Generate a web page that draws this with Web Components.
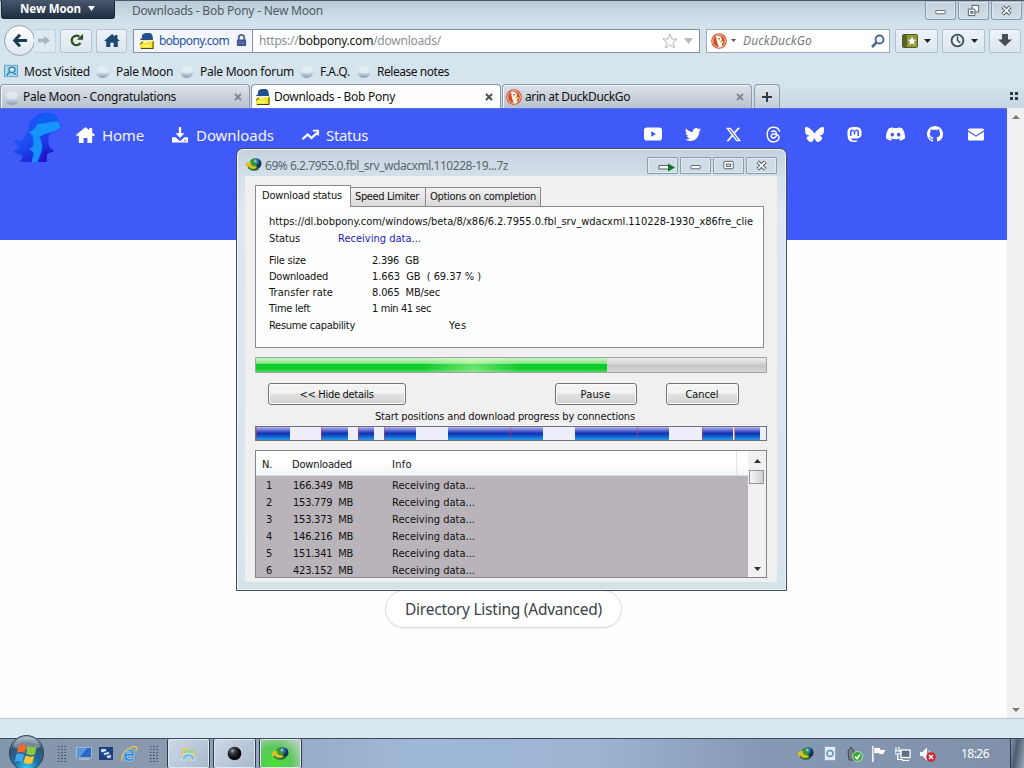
<!DOCTYPE html>
<html lang="en">
<head>
<meta charset="utf-8">
<title>Downloads - Bob Pony - New Moon</title>
<style>
  html, body { margin: 0; width: 1024px; height: 768px; overflow: hidden; background: #fefefe; }
  body { font: 12px/16px "Noto Sans", "Open Sans", sans-serif; color: #111; }
</style>
</head>
<body>
<nm-desktop></nm-desktop>

<script>
// Every drawing used by the page, keyed by name: [viewBox, markup]
const ICONS = {
  back: ['0 0 18 18', '<path d="M9 2 3 9l6 7M4 9h13" fill="none" stroke="#1d3c52" stroke-width="3.4"/>'],
  forward: ['0 0 12 12', '<path d="M0 4h6V1l6 5-6 5V8H0z" fill="#a9b6c2"/>'],
  reload: ['0 0 16 16', '<path d="M12.2 10.5A5 5 0 1 1 11 4" fill="none" stroke="#2f4f20" stroke-width="2.4"/><path d="M8.5 7.2H15V.8z" fill="#2f4f20"/>'],
  home: ['0 0 16 16', '<path d="M0 8.5 8 1l3 2.8V2h2.4v4L16 8.500l-2.2.3V15H9.700v-4.500H6.300V15H2.200V8.800z" fill="#1e4870"/>'],
  pony: ['0 0 16 16', '<path d="M1 7Q1 6 3 5 2 0 8 0h3q3 1 3 7H1z" fill="#23518f"/><path d="M2 9l3-2 5 1 2 1 1-2 2 1v8H1v-5z" fill="#f3e52e"/><path d="M4 8.500l2-1 3 .5-1 2H5z" fill="#f7f3d8"/><path d="M1 11l3-2M14 8.500V15.500H2" stroke="#33301a" fill="none" stroke-width=".9"/><path d="M3 12h8v2H3z" fill="#fff27a"/>'],
  lock: ['0 0 12 14', '<path d="M3 7V4a3 3 0 0 1 6 0v3" fill="none" stroke="#53659c" stroke-width="2"/><rect x="1" y="6" width="10" height="7" rx="1" fill="#3c5195"/><path d="M2 8.500h8M2 10.500h8" stroke="#6e7fb6"/>'],
  star: ['0 0 16 16', '<path d="M8 1l2 5h5l-4 3.300L12.500 15 8 11.500 3.500 15 5 9.300 1 6h5z" fill="#fff" stroke="#b3b7bd"/>'],
  drop: ['0 0 8 5', '<path d="M0 0h8L4 5z" fill="currentColor"/>'],
  duck: ['0 0 16 16', '<circle cx="8" cy="8" r="7.800" fill="#cf4a27"/><circle cx="8" cy="8" r="6.300" fill="none" stroke="#fbe3d4" stroke-width=".9"/><path d="M5 3q5-1 6 3l-.5 2 2.500 1-2 1.500L11 14l-3 .5Q6 10 5.500 7z" fill="#fff4e6"/><path d="M9 8l4 .3-3 1.500z" fill="#f0b32c"/><circle cx="8" cy="5.800" r=".8" fill="#345"/>'],
  search: ['0 0 14 14', '<circle cx="8.500" cy="5.500" r="4" fill="#f4f8ff" stroke="#4b6396" stroke-width="1.800"/><path d="M5.500 8.500 1 13" stroke="#4b6396" stroke-width="2.500"/>'],
  bookmarks: ['0 0 16 14', '<rect x=".5" y=".5" width="15" height="13" rx="1" fill="#8e9834" stroke="#535b22"/><path d="M1 1h4v12H1z" fill="#59622b"/><path d="M10 2.500l1.300 3 3 .2-2.300 2 .8 3.300L10 9.300 7.200 11 8 7.700 5.700 5.700l3-.2z" fill="#fff"/>'],
  clock: ['0 0 16 16', '<circle cx="8" cy="8" r="6.300" fill="#eef3f6" stroke="#3d4f52" stroke-width="2"/><path d="M8 3.500V8l3 2.500" fill="none" stroke="#3d4f52" stroke-width="1.600"/>'],
  arrowdown: ['0 0 14 16', '<path d="M4 1h6v6h4l-7 7-7-7h4z" fill="#474d54"/>'],
  visited: ['0 0 14 16', '<rect x=".5" y="1.500" width="13" height="13" fill="#a8d8ec" stroke="#5ba0c2"/><circle cx="8" cy="6.500" r="3" fill="#d9f1fa" stroke="#2d7fae" stroke-width="1.300"/><path d="M6 9l-3.500 4M9 10l3 2" stroke="#2d7fae" stroke-width="1.600"/>'],
  moon: ['0 0 14 14', '<defs><linearGradient id="m" x1="0" y1="0" x2="0" y2="1"><stop offset=".3" stop-color="#d3dee8" stop-opacity="0"/><stop offset=".6" stop-color="#b9c4d3"/><stop offset="1" stop-color="#8b97ad"/></linearGradient></defs><path d="M0 6Q3 8 7 8t7-3q.5 8-7 9-7 0-7-8z" fill="url(#m)"/><ellipse cx="7" cy="5.500" rx="5.500" ry="3.500" fill="#e6edf4" opacity=".8"/>'],
  close: ['0 0 8 8', '<path d="M1 1l6 6M7 1 1 7" stroke="currentColor" stroke-width="1.900"/>'],
  plus: ['0 0 12 12', '<path d="M6 1v10M1 6h10" stroke="#2f3b48" stroke-width="2"/>'],
  dots: ['0 0 10 8', '<path d="M1 0h3v3H1zM6 0h3v3H6zM1 5h3v3H1zM6 5h3v3H6z" fill="#2e3a44"/>'],
  winmin: ['0 0 16 14', '<rect x="3" y="7" width="10" height="3.500" rx=".5" fill="#fff" stroke="#5b636c"/>'],
  winrestore: ['0 0 16 14', '<path d="M6.500 1.500h7v7h-7z" fill="#fff" stroke="#4d5660"/><path d="M2.500 5.500h7v7h-7z" fill="#fff" stroke="#4d5660"/><path d="M5 8h2.500v2H5z" fill="#dde" stroke="#4d5660"/>'],
  winmax: ['0 0 16 14', '<rect x="3" y="2.500" width="10" height="8" rx="1" fill="#fff" stroke="#4d5660"/><rect x="6" y="5.500" width="4" height="2.500" fill="#eef" stroke="#4d5660"/>'],
  winclose: ['0 0 16 14', '<path d="M4 3l8 8M12 3l-8 8" stroke="#4d5660" stroke-width="4"/><path d="M4.300 3.300l7.400 7.400M11.700 3.300l-7.400 7.400" stroke="#fff" stroke-width="1.800"/>'],
  wintray: ['0 0 18 14', '<rect x="2" y="6.500" width="10" height="3.500" fill="#fff" stroke="#5b636c"/><path d="M11 4.500l7 4-7 4z" fill="#117226"/>'],
  globe: ['0 0 16 16', '<defs><radialGradient id="g" cx=".4" cy=".3"><stop offset="0" stop-color="#d7f0ff"/><stop offset=".5" stop-color="#3579b4"/><stop offset="1" stop-color="#12304f"/></radialGradient></defs><circle cx="9.500" cy="7" r="6" fill="url(#g)"/><path d="M4 5Q5 1 9 2l-1 3 3 2-2 5-3-1z" fill="#2e9a31"/><path d="M0 6l5-1v3q3 3 6 2l-1 3q-5 2-8-3L0 11z" fill="#d8c026"/><path d="M2 10q4 5 10 1l1 2q-6 4-11-1z" fill="#1f6e2c"/>'],
  navhome: ['0 0 20 18', '<path d="M10 0 0 9l1.300 1.500L3 9.300V18h5v-5.500h4V18h5V9.300l1.700 1.200L20 9l-3-2.700V1h-3v2.600z" fill="#fff"/>'],
  navdown: ['0 0 18 18', '<path d="M0 11.500h4L9 16l5-4.500h4v6H0z" fill="#fff"/><path d="M7.700 0h2.600v7H14l-5 5.500L4 7h3.700z" fill="#fff"/><path d="M13.500 15.500h2.500" stroke="#4059f9"/>'],
  navstatus: ['0 0 20 14', '<path d="M1.500 12 7 6.500l4 4L17.500 4" fill="none" stroke="#fff" stroke-width="2.500"/><path d="M12.500 1H19v6.500h-2V3h-4.500z" fill="#fff"/>'],
  youtube: ['0 0 18 14', '<rect y=".5" width="18" height="13" rx="2.800" fill="#fff"/><path d="M7.200 4.200 12 7l-4.800 2.800z" fill="#4059f9"/>'],
  twitter: ['0 0 16 16', '<path fill="#fff" d="M5.026 15c6.038 0 9.341-5.003 9.341-9.334q.002-.211-.006-.422A6.700 6.700 0 0 0 16 3.542a6.700 6.700 0 0 1-1.889.518 3.300 3.300 0 0 0 1.447-1.817 6.500 6.500 0 0 1-2.087.793A3.286 3.286 0 0 0 7.875 6.030a9.320 9.320 0 0 1-6.767-3.429 3.290 3.290 0 0 0 1.018 4.382A3.300 3.300 0 0 1 .64 6.575v.045a3.290 3.290 0 0 0 2.632 3.218 3.200 3.200 0 0 1-.865.115 3 3 0 0 1-.614-.057 3.280 3.280 0 0 0 3.067 2.277A6.600 6.600 0 0 1 .78 13.580a6 6 0 0 1-.78-.045A9.340 9.340 0 0 0 5.026 15"/>'],
  x: ['0 0 16 16', '<path fill="#fff" d="M12.600.75h2.454l-5.360 6.142L16 15.250h-4.937l-3.867-5.070-4.425 5.070H.316l5.733-6.570L0 .75h5.063l3.495 4.633L12.601.75Zm-.86 13.028h1.360L4.323 2.145H2.865z"/>'],
  threads: ['0 0 448 512', '<path fill="#fff" d="M331.500 235.700c2.200 .9 4.200 1.900 6.300 2.800 29.200 14.100 50.600 35.200 61.800 61.400 15.700 36.500 17.200 95.800-30.300 143.200-36.200 36.200-80.300 52.500-142.600 53h-.3c-70.200-.5-124.100-24.100-160.400-70.200-32.300-41-48.900-98.100-49.500-169.600V256v-.2C17 184.300 33.600 127.200 65.900 86.200 102.200 40.100 156.200 16.500 226.400 16h.3c70.300 .5 124.900 24 162.300 69.900 18.400 22.700 32 50 40.600 81.700l-40.400 10.800c-7.100-25.800-17.800-47.800-32.200-65.400-29.200-35.800-73-54.200-130.500-54.600-57 .5-100.100 18.800-128.200 54.400C72.100 146.100 58.500 194.300 58 256c.5 61.700 14.100 109.900 40.300 143.300 28 35.600 71.200 53.900 128.200 54.400 51.400-.4 85.400-12.600 113.700-40.900 32.300-32.200 31.700-71.800 21.400-95.900-6.100-14.200-17.100-26-31.900-34.900-3.700 26.900-11.800 48.300-24.700 64.800-17.100 21.800-41.400 33.600-72.700 35.300-23.600 1.300-46.300-4.400-63.900-16-20.800-13.800-33-34.800-34.300-59.300-2.500-48.300 35.700-83 95.200-86.400 21.100-1.200 40.900-.3 59.200 2.800-2.400-14.800-7.300-26.600-14.600-35.200-10-11.700-25.600-17.700-46.200-17.800H227c-16.600 0-39 4.600-53.300 26.300l-34.400-23.600c19.200-29.100 50.300-45.100 87.800-45.100h.8c62.600 .4 99.900 39.500 103.700 107.700l-.2 .2zm-156 68.800c1.300 25.100 28.400 36.800 54.600 35.300 25.600-1.400 54.600-11.400 59.500-73.200-13.200-2.900-27.800-4.400-43.400-4.400-4.800 0-9.600 .1-14.400 .4-42.900 2.400-57.200 23.200-56.200 41.800l-.1 .1z"/>'],
  butterfly: ['0 0 24 24', '<path fill="#fff" d="M12 10.800c-1.087-2.114-4.046-6.053-6.798-7.995C2.566.944 1.561 1.266.902 1.565.139 1.908 0 3.080 0 3.768c0 .69.378 5.650.624 6.479.815 2.736 3.713 3.660 6.383 3.364-3.912.58-7.387 2.005-2.830 7.078 5.013 5.190 6.870-1.113 7.823-4.308.953 3.195 2.050 9.271 7.733 4.308 4.267-4.308 1.172-6.498-2.740-7.078 2.670.297 5.568-.628 6.383-3.364.246-.828.624-5.790.624-6.478 0-.69-.139-1.861-.902-2.206-.659-.298-1.664-.62-4.300 1.240C16.046 4.748 13.087 8.687 12 10.800Z"/>'],
  mastodon: ['0 0 16 16', '<path fill="#fff" d="M11.190 12.195c2.016-.24 3.770-1.475 3.990-2.603.348-1.778.32-4.339.32-4.339 0-3.470-2.286-4.488-2.286-4.488C12.062.238 10.083.017 8.027 0h-.05C5.920.017 3.942.238 2.790.765c0 0-2.285 1.017-2.285 4.488l-.002.662c-.004.64-.007 1.350.011 2.091.083 3.394.626 6.740 3.780 7.570 1.454.383 2.703.463 3.709.408 1.823-.1 2.847-.647 2.847-.647l-.06-1.317s-1.303.41-2.767.36c-1.450-.05-2.980-.156-3.215-1.928a4 4 0 0 1-.033-.496s1.424.346 3.228.428c1.103.05 2.137-.064 3.188-.189zm1.613-2.470H11.130v-4.080c0-.859-.364-1.295-1.091-1.295-.804 0-1.207.517-1.207 1.541v2.233H7.168V5.890c0-1.024-.403-1.541-1.207-1.541-.727 0-1.091.436-1.091 1.296v4.079H3.197V5.522q0-1.288.66-2.046c.456-.505 1.052-.764 1.793-.764.856 0 1.504.328 1.933.983L8 4.390l.417-.695c.429-.655 1.077-.983 1.934-.983.74 0 1.336.259 1.791.764q.662.757.661 2.046z"/>'],
  discord: ['0 0 16 16', '<path fill="#fff" d="M13.545 2.907a13.200 13.200 0 0 0-3.257-1.011.05.05 0 0 0-.052.025c-.141.25-.297.577-.406.833a12.200 12.200 0 0 0-3.658 0 8 8 0 0 0-.412-.833.05.05 0 0 0-.052-.025c-1.125.194-2.220.534-3.257 1.011a.04.04 0 0 0-.021.018C.356 6.024-.213 9.047.066 12.032q.003.022.021.037a13.300 13.300 0 0 0 3.995 2.020.05.05 0 0 0 .056-.019q.463-.63.818-1.329a.05.05 0 0 0-.01-.059l-.018-.011a9 9 0 0 1-1.248-.595.05.05 0 0 1-.02-.066l.015-.019q.127-.095.248-.195a.05.05 0 0 1 .051-.007c2.619 1.196 5.454 1.196 8.041 0a.05.05 0 0 1 .053.007q.121.1.248.195a.05.05 0 0 1-.004.085 8 8 0 0 1-1.249.594.05.05 0 0 0-.03.03.05.05 0 0 0 .003.041c.24.465.515.909.817 1.329a.05.05 0 0 0 .056.019 13.200 13.200 0 0 0 4.001-2.020.05.05 0 0 0 .021-.037c.334-3.451-.559-6.449-2.366-9.106a.03.03 0 0 0-.02-.019m-8.198 7.307c-.789 0-1.438-.724-1.438-1.612s.637-1.613 1.438-1.613c.807 0 1.450.73 1.438 1.613 0 .888-.637 1.612-1.438 1.612m5.316 0c-.788 0-1.438-.724-1.438-1.612s.637-1.613 1.438-1.613c.807 0 1.451.73 1.438 1.613 0 .888-.631 1.612-1.438 1.612"/>'],
  github: ['0 0 16 16', '<path fill="#fff" d="M8 0C3.580 0 0 3.580 0 8c0 3.540 2.290 6.530 5.470 7.590.4.07.55-.17.55-.38 0-.19-.01-.82-.01-1.490-2.010.37-2.530-.49-2.690-.94-.09-.23-.48-.94-.82-1.130-.28-.15-.68-.52-.01-.53.63-.01 1.080.58 1.230.82.72 1.210 1.870.87 2.330.66.07-.52.28-.87.51-1.070-1.780-.2-3.640-.89-3.640-3.950 0-.87.31-1.590.82-2.150-.08-.2-.36-1.020.08-2.120 0 0 .67-.21 2.200.82.64-.18 1.320-.27 2-.27s1.360.09 2 .27c1.530-1.040 2.200-.82 2.200-.82.44 1.100.16 1.920.08 2.120.51.56.82 1.270.82 2.150 0 3.070-1.870 3.750-3.650 3.950.29.25.54.73.54 1.480 0 1.070-.01 1.930-.01 2.200 0 .21.15.46.55.38A8.010 8.010 0 0 0 16 8c0-4.420-3.580-8-8-8"/>'],
  mail: ['0 0 16 13', '<rect y=".5" width="16" height="12" rx="1.500" fill="#fff"/><path d="M0 3l8 5.200L16 3" fill="none" stroke="#4059f9" stroke-width="1.100"/>'],
  logo: ['0 0 52 52', '<defs><linearGradient id="l" x1="0" y1="0" x2=".7" y2="1"><stop offset="0" stop-color="#2347f0"/><stop offset=".5" stop-color="#1b52f6"/><stop offset="1" stop-color="#1f12cc"/></linearGradient></defs><path d="M13 24Q18 19 17 13 21 3 33 1q13-2 14 8l4 5-5 5-8 3q-2 7 0 13l5 4-7 3-1 8H8l3-6-10-4 6-5-6-7 9 1z" fill="url(#l)"/><path d="M17 20q5-1 9-8l21-3 3 6-5 4-12 3-5 3-6-1z" fill="#1596ff"/><path d="M21 23l7 2q5 9 1 17l-3 8h-6l2-9-4-4 4-4z" fill="#1590fb"/><path d="M26 6q8-6 17-3 4 2 4 7l-8-2-9 4-5-1z" fill="#0d5ff0"/><path d="M36 37l-1 13h-6l4-10z" fill="#2413c6"/>'],
  desktop: ['0 0 16 14', '<rect x=".5" y=".5" width="15" height="11" fill="#2b69c4" stroke="#9fb9d6"/><path d="M1 1h10L4 11H1z" fill="#5b94dc"/><path d="M3 13h10" stroke="#c5d4e4"/>'],
  switcher: ['0 0 15 14', '<rect width="15" height="14" fill="#1b3f86"/><path d="M2 2h6v4H2zM5 5h6v4H5zM8 8h5v4H8z" fill="#eaf3ff" stroke="#1b3f86" stroke-width=".8"/>'],
  ie: ['0 0 18 16', '<path d="M14 10H6q1 3 3 3t3-1l2 .5q-2 3-5.500 3Q3 15 3 9q0-6 6-6 5.500 0 5 7zM6 7.500h5Q11 5 8.500 5T6 7.500z" fill="#2a8ee8" stroke="#bfe2fb" stroke-width=".6"/><path d="M1 15Q-1 9 8 3q6-4 8-2t-1 4" fill="none" stroke="#e9c24b" stroke-width="1.500"/>'],
  orb: ['0 0 38 34', '<defs><radialGradient id="o" cx=".5" cy=".95" r=".9"><stop offset="0" stop-color="#39d2f7"/><stop offset=".4" stop-color="#1c6fa6"/><stop offset=".8" stop-color="#38536f"/><stop offset="1" stop-color="#8fa6b9"/></radialGradient></defs><circle cx="19" cy="19" r="17.500" fill="url(#o)" stroke="#2f4356" stroke-width="1"/><path d="M5 13Q9 3 19 3t14 10q-14 5-28 0z" fill="#fff" opacity=".3"/><path d="M11 12q4-3 8-1l-2 8q-4-2-8 0z" fill="#ee6a2c"/><path d="M20.500 11.500q4 3 9 1l-2 8q-5 2-9-1z" fill="#8cc63f"/><path d="M8.500 20.500q4-2 8 0l-2 7.500q-4-2-7.500 0z" fill="#45a8ee"/><path d="M18 21.500q4 2 9 .5l-2 7q-5 2-9-.5z" fill="#fbc430"/>'],
  explorer: ['0 0 18 18', '<path d="M2 3h6l1 2h7v9H2z" fill="#e6d67e" stroke="#c9bd74" stroke-width=".5"/><path d="M3 5h12v4H3z" fill="#a3cf9b"/><path d="M2 16q0-7 7-7t7 7h-4q0-3-3-3t-3 3z" fill="#7fc0e2" stroke="#e8f5fb" stroke-width=".7"/>'],
  blackball: ['0 0 16 16', '<defs><radialGradient id="b" cx=".35" cy=".3"><stop offset="0" stop-color="#b4bac2"/><stop offset=".35" stop-color="#40464e"/><stop offset="1" stop-color="#0a0c10"/></radialGradient></defs><circle cx="8" cy="8" r="7.300" fill="url(#b)"/>'],
  traydoc: ['0 0 12 15', '<rect x=".5" y=".5" width="11" height="14" rx="1" fill="#e3edf5" stroke="#8ea6bc"/><circle cx="6" cy="7.500" r="3" fill="none" stroke="#5b90bd" stroke-width="1.500"/>'],
  trayusb: ['0 0 17 16', '<path d="M2 5l3-4 3 4v9H3z" fill="#747d84" stroke="#3f474d"/><circle cx="11.500" cy="10.500" r="5" fill="#35a836" stroke="#e4f5df" stroke-width=".7"/><path d="M9 10.500l2 2.200 3-4.200" fill="none" stroke="#fff" stroke-width="1.600"/>'],
  trayflag: ['0 0 17 16', '<path d="M2 0v16" stroke="#fff" stroke-width="1.600"/><path d="M3 1.500h7v2h6l-3 5H9l-.5-1H3z" fill="#fff" stroke="#5d6f86" stroke-width=".5"/>'],
  traynet: ['0 0 16 16', '<rect x="6" y="4" width="9" height="7.500" fill="#5c6f86" stroke="#fff" stroke-width="1.300"/><path d="M1 1v4M4 1v4M0 5h5.500v3H0zM2.700 8v5.500H8M7 14.500h7" fill="none" stroke="#fff" stroke-width="1.200"/>'],
  trayvol: ['0 0 16 16', '<path d="M0 6h2.500L7 1.500v13L2.500 10H0z" fill="#fff"/><path d="M9 4q2 3 0 8" stroke="#dde5ee" fill="none"/><circle cx="11" cy="11" r="4.800" fill="#d4242b"/><path d="M9 9l4 4M13 9l-4 4" stroke="#fff" stroke-width="1.500"/>']
};

// <nm-icon name w h>
class NmIcon extends HTMLElement {
  connectedCallback() {
    if (this.shadowRoot) return;
    const [box, art] = ICONS[this.getAttribute('name')];
    this.attachShadow({ mode: 'open' }).innerHTML = `
      <style>
        :host { display: block; flex: none; line-height: 0; }
        svg { display: block; }
      </style>
      <svg width="${this.getAttribute('w')}" height="${this.getAttribute('h')}" viewBox="${box}" preserveAspectRatio="none">${art}</svg>`;
  }
}

// <nm-label w> spaces its letters so that the line is w pixels long
class NmLabel extends HTMLElement {
  connectedCallback() {
    if (this.shadowRoot) return;
    // no blanks around the slot: white-space is pre here
    this.attachShadow({ mode: 'open' }).innerHTML = '<style>:host { display: inline-block; flex: none; white-space: pre; vertical-align: top; }</style><slot></slot>';
    const w = parseFloat(this.getAttribute('w'));
    if (!w) return;
    const natural = this.getBoundingClientRect().width;
    this.style.letterSpacing = ((w - natural) / this.textContent.length).toFixed(3) + 'px';
    this.style.width = w + 'px';
  }
}

// Small base so each part only has to give its markup
class NmPart extends HTMLElement {
  connectedCallback() {
    if (this.shadowRoot) return;
    this.attachShadow({ mode: 'open' }).innerHTML = this.render();
  }
}

class NmTitlebar extends NmPart {
  render() {
    return `
    <style>
      :host { display: flex; height: 24px; box-sizing: border-box; border-top: 1px solid #4a5666; align-items: flex-start;
        background: linear-gradient(#b9c9d6, #cbdbe6 60%, #d3e1eb); }
      .app { width: 112px; height: 17px; margin-left: 1px; border: 1px solid #1e2937; border-top: 0; border-radius: 0 0 3px 3px;
        background: linear-gradient(#44566c, #1f2e42); color: #fff; font: bold 11.500px/16px "Open Sans", sans-serif; display: flex; align-items: center; }
      .app nm-label { margin: -2px 0 0 18px; }
      .app nm-icon { margin: -2px 0 0 7px; }
      .title { margin: 2px 0 0 17px; font-size: 12px; color: #4f5b66; flex: 1; }
      .btns { display: flex; gap: 2px; margin-right: 2px; }
      .btns span { width: 29px; height: 17px; border: 1px solid #8798a8; border-top-color: #a9b8c4; border-radius: 0 0 3px 3px; display: flex;
        align-items: center; justify-content: center; background: linear-gradient(#c3d0db, #d3dfe8); box-shadow: inset 0 0 0 1px #dce7ef; }
    </style>
    <div class="app"><nm-label w="61">New Moon</nm-label><nm-icon name="drop" w="7" h="5"></nm-icon></div>
    <div class="title"><nm-label w="191">Downloads - Bob Pony - New Moon</nm-label></div>
    <div class="btns">
      <span><nm-icon name="winmin" w="15" h="13"></nm-icon></span>
      <span><nm-icon name="winrestore" w="15" h="13"></nm-icon></span>
      <span><nm-icon name="winclose" w="15" h="13"></nm-icon></span>
    </div>`;
  }
}

class NmNavbar extends NmPart {
  render() {
    return `
    <style>
      :host { display: flex; height: 33px; align-items: center; box-sizing: border-box; padding: 0 2px 0 4px;
        background: linear-gradient(#d3e1eb, #d6e4ee); }
      .back { width: 29px; height: 29px; border: 1px solid #93a3b2; border-radius: 50%; display: flex; align-items: center; justify-content: center; flex: none;
        background: linear-gradient(#fdfeff, #dfe9f1); }
      .btn { height: 22px; border: 1px solid #b2c1ce; border-radius: 2px; display: flex; align-items: center; justify-content: center; flex: none;
        background: linear-gradient(#edf3f8, #dbe6ee); box-sizing: content-box; gap: 6px; color: #222; }
      .fwd { width: 22px; border-left: 0; margin-left: -1px; background: #dde8f0; border-color: #c3d0da; justify-content: flex-start; padding-left: 4px; box-sizing: border-box; height: 24px; }
      .field { height: 22px; border: 1px solid #7f90a3; background: #fff; display: flex; align-items: center; flex: none; }
      .url { width: 565px; margin-left: 6px; }
      .id { height: 100%; width: 119px; display: flex; align-items: center; border-right: 1px solid #8092a5; background: #f2f6fc; color: #28549c; flex: none; box-sizing: border-box; }
      .url nm-label { font-size: 12px; }
      .grey { color: #8b9096; }
      .grey b { font-weight: normal; color: #111; }
      .search { width: 182px; margin-left: 6px; border-color: #9aabba; }
      .search nm-label { font-style: italic; color: #757b82; margin-left: 7px; }
    </style>
    <div class="back"><nm-icon name="back" w="16" h="15"></nm-icon></div>
    <div class="btn fwd"><nm-icon name="forward" w="12" h="11"></nm-icon></div>
    <div class="btn" style="width:30px;margin-left:4px"><nm-icon name="reload" w="15" h="15"></nm-icon></div>
    <div class="btn" style="width:29px;margin-left:4px"><nm-icon name="home" w="16" h="15"></nm-icon></div>
    <div class="field url">
      <div class="id">
        <nm-icon name="pony" w="16" h="16" style="margin-left:5px"></nm-icon>
        <nm-label w="70" style="margin-left:4px">bobpony.com</nm-label>
        <nm-icon name="lock" w="11" h="13" style="margin-left:7px"></nm-icon>
      </div>
      <nm-label class="grey" w="182" style="margin-left:6px">https://<b>bobpony.com</b>/downloads/</nm-label>
      <nm-icon name="star" w="16" h="16" style="margin-left:221px"></nm-icon>
      <nm-icon name="drop" w="9" h="6" style="margin-left:6px;color:#b5bac0"></nm-icon>
    </div>
    <div class="field search">
      <nm-icon name="duck" w="16" h="16" style="margin-left:4px"></nm-icon>
      <nm-icon name="drop" w="5" h="3" style="margin-left:4px;color:#555"></nm-icon>
      <nm-label w="69">DuckDuckGo</nm-label>
      <nm-icon name="search" w="14" h="14" style="margin-left:59px"></nm-icon>
    </div>
    <div class="btn" style="width:41px;margin-left:5px"><nm-icon name="bookmarks" w="16" h="14"></nm-icon><nm-icon name="drop" w="7" h="4"></nm-icon></div>
    <div class="btn" style="width:41px;margin-left:4px"><nm-icon name="clock" w="15" h="15"></nm-icon><nm-icon name="drop" w="7" h="4"></nm-icon></div>
    <div class="btn" style="width:30px;margin-left:4px"><nm-icon name="arrowdown" w="14" h="15"></nm-icon></div>`;
  }
}

class NmBookmarks extends NmPart {
  render() {
    const items = [['visited', 24, 66], ['moon', 116, 57], ['moon', 200, 94], ['moon', 320, 30], ['moon', 377, 72]];
    const names = ['Most Visited', 'Pale Moon', 'Pale Moon forum', 'F.A.Q.', 'Release notes'];
    let x = 0;
    const row = items.map(([icon, at, w], i) => {
      const gap = at - 20 - x;
      x = at + w;
      return `<nm-icon name="${icon}" w="14" h="14" style="margin-left:${gap}px;margin-right:6px"></nm-icon><nm-label w="${w}">${names[i]}</nm-label>`;
    }).join('');
    return `
    <style>:host { display: flex; height: 27px; align-items: center; background: #d6e4ee; } nm-label { margin-top: 2px; }</style>${row}`;
  }
}

class NmTab extends NmPart {
  render() {
    const on = this.hasAttribute('active');
    return `
    <style>
      :host { display: flex; align-items: center; box-sizing: border-box; height: 24px; width: 250px; flex: none; border: 1px solid #8d9cab; border-bottom: 0;
        border-radius: 4px 4px 0 0; background: ${on ? '#fdfefe' : 'linear-gradient(#dbe2e9, #b8c2ce)'}; box-shadow: inset 1px 1px 0 #f2f6f9; }
      .x { margin-left: auto; margin-right: 7px; color: ${on ? '#444c55' : '#7f8790'}; }
    </style>
    <nm-icon name="${this.getAttribute('icon')}" w="16" h="16" style="margin-left:3px"></nm-icon>
    <nm-label w="${this.getAttribute('w')}" style="margin-left:3px">${this.getAttribute('text')}</nm-label>
    <nm-icon class="x" name="close" w="8" h="8"></nm-icon>`;
  }
}

class NmTabstrip extends NmPart {
  render() {
    return `
    <style>
      :host { display: flex; height: 24px; background: linear-gradient(#d6e4ee, #c8d6e2); gap: 1px; align-items: flex-end; }
      .new { width: 26px; height: 24px; box-sizing: border-box; border: 1px solid #8d9cab; border-bottom: 0; border-radius: 4px 4px 0 0; margin-left: 1px;
        display: flex; align-items: center; justify-content: center; background: linear-gradient(#e0e7ed, #c3ccd6); }
      .all { margin: 0 5px 8px auto; }
    </style>
    <nm-tab icon="moon" text="Pale Moon - Congratulations" w="153"></nm-tab>
    <nm-tab icon="pony" text="Downloads - Bob Pony" w="121" active></nm-tab>
    <nm-tab icon="duck" text="arin at DuckDuckGo" w="105"></nm-tab>
    <div class="new"><nm-icon name="plus" w="12" h="12"></nm-icon></div>
    <nm-icon class="all" name="dots" w="10" h="8"></nm-icon>`;
  }
}

class NmPage extends NmPart {
  render() {
    const social = [['youtube', 18, 14], ['twitter', 16, 16], ['x', 15, 15], ['threads', 15, 17], ['butterfly', 19, 17],
      ['mastodon', 15, 15], ['discord', 19, 18], ['github', 16, 16], ['mail', 16, 13]];
    return `
    <style>
      :host { display: flex; height: 610px; background: #fefefe; }
      main { width: 1007px; }
      header { height: 132px; background: #4059f9; display: flex; align-items: flex-start; box-sizing: border-box; padding-left: 12px; border-top: 1px solid #5570d8; }
      header a { display: flex; align-items: center; height: 28px; margin-top: 12px; color: #f2f4ff; font: 15px/28px "Noto Sans", sans-serif; }
      .social { display: flex; margin: 12px 0 0 auto; padding-right: 11px; }
      .social span { width: 40.4px; height: 26px; display: flex; align-items: center; justify-content: center; }
      .listing { margin: 350px 0 0 385px; width: 235px; height: 36px; border: 1px solid #dcdde1; border-radius: 19px; background: #fff; color: #3c4148;
        font: 15.500px/37px "Noto Sans", sans-serif; text-align: center; box-shadow: 0 1px 1px #eee; }
      aside { width: 17px; background: #f0f0f0; display: flex; flex-direction: column; justify-content: space-between; align-items: center; padding: 7px 0 6px; box-sizing: border-box; color: #74797e; }
    </style>
    <main>
      <header>
        <nm-icon name="logo" w="51" h="52" style="margin-top:3px"></nm-icon>
        <a style="margin-left:13px"><nm-icon name="navhome" w="19" h="16" style="margin-right:7px"></nm-icon><nm-label w="42">Home</nm-label></a>
        <a style="margin-left:28px"><nm-icon name="navdown" w="16" h="16" style="margin-right:8px"></nm-icon><nm-label w="78">Downloads</nm-label></a>
        <a style="margin-left:27px"><nm-icon name="navstatus" w="19" h="12" style="margin-right:6px"></nm-icon><nm-label w="42">Status</nm-label></a>
        <div class="social">${social.map(([n, w, h]) => `<span><nm-icon name="${n}" w="${w}" h="${h}"></nm-icon></span>`).join('')}</div>
      </header>
      <div class="listing"><nm-label w="197">Directory Listing (Advanced)</nm-label></div>
    </main>
    <aside>
      <nm-icon name="drop" w="8" h="4" style="transform:scaleY(-1)"></nm-icon>
      <nm-icon name="drop" w="8" h="4"></nm-icon>
    </aside>`;
  }
}

class NmTaskbar extends NmPart {
  render() {
    return `
    <style>
      :host { display: flex; height: 30px; box-sizing: border-box; border-top: 1px solid #3c4958; align-items: center;
        background: linear-gradient(90deg, #8296ac 0, #8a9aae 160px, #98adc8 310px, #a0b8d8 420px, #9cb3d2 600px, #8699b4 760px, #7f90a8 1024px); }
      .grip { width: 10px; height: 18px; background: radial-gradient(circle, #45566a 0 .9px, transparent 1.100px) 0 0 / 3.300px 3px; }
      .task { width: 41px; height: 29px; box-sizing: content-box; border: 1px solid #2d3a4a; border-top: 0; border-bottom: 0; border-radius: 2px; display: flex; align-items: center; justify-content: center;
        background: linear-gradient(135deg, #cdd9e8, #aab8cc); box-shadow: inset 0 0 0 1px #dfe8f2; margin-right: 3px; }
      .busy { background: radial-gradient(circle at 35% 85%, #4ae038 0, #57c956 45%, #b2cfbb 85%); width: 41px; }
      .tray { display: flex; align-items: center; margin-left: auto; }
      .clock { color: #fff; font-size: 12px; margin: 0 21px 0 25px; }
      .show { width: 14px; height: 29px; background: linear-gradient(100deg, #8496a9, #4b5d70 40%, #9aaabd); border-left: 1px solid #2d3c4d; box-sizing: border-box; }
    </style>
    <nm-icon name="orb" w="37" h="34" style="margin:-5px 0 0 8px;align-self:flex-start"></nm-icon>
    <div class="grip" style="margin:0 9px 0 12px"></div>
    <nm-icon name="desktop" w="16" h="13"></nm-icon>
    <nm-icon name="switcher" w="14" h="13" style="margin-left:7px"></nm-icon>
    <nm-icon name="ie" w="17" h="16" style="margin-left:8px"></nm-icon>
    <div class="grip" style="margin:0 8px 0 11px"></div>
    <div class="task"><nm-icon name="explorer" w="17" h="17"></nm-icon></div>
    <div class="task"><nm-icon name="blackball" w="15" h="15"></nm-icon></div>
    <div class="task busy"><nm-icon name="globe" w="17" h="15"></nm-icon></div>
    <div class="tray">
      <nm-icon name="globe" w="16" h="15"></nm-icon>
      <nm-icon name="traydoc" w="12" h="15" style="margin-left:10px"></nm-icon>
      <nm-icon name="trayusb" w="17" h="16" style="margin-left:10px"></nm-icon>
      <nm-icon name="trayflag" w="16" h="16" style="margin-left:8px"></nm-icon>
      <nm-icon name="traynet" w="16" h="16" style="margin-left:8px"></nm-icon>
      <nm-icon name="trayvol" w="16" h="16" style="margin-left:9px"></nm-icon>
      <nm-label class="clock" w="28">18:26</nm-label>
      <div class="show"></div>
    </div>`;
  }
}

class IdmButton extends NmPart {
  render() {
    return `
    <style>
      :host { display: flex; align-items: center; justify-content: center; height: 22px; box-sizing: border-box; border: 1px solid #70757b; border-radius: 3px; padding: 2px 1px 0 0;
        background: linear-gradient(#f3f3f3 0 45%, #e2e2e2 50%, #d2d2d2); box-shadow: inset 0 0 0 1px #fafafa; }
    </style><slot></slot>`;
  }
}

// Detail page of the download: name / value pairs under the tab row
class IdmStatus extends NmPart {
  render() {
    return `
    <style>
      :host { display: block; height: 163px; }
      .tabs { display: flex; align-items: flex-end; height: 21px; }
      .tabs span { box-sizing: border-box; height: 19px; border: 1px solid #868a8e; border-bottom: 0; border-left: 0; display: flex; justify-content: center; align-items: center;
        background: linear-gradient(#f2f2f2, #d9d9d9); }
      .tabs .on { height: 22px; margin-bottom: -1px; background: #fff; border-left: 1px solid #868a8e; padding: 0 2px 2px 0; position: relative; z-index: 1; }
      .panel { height: 142px; width: 509px; box-sizing: border-box; border: 1px solid #868a8e; background: #fefefe; padding: 6px 9px 0 13px;
        display: grid; grid-template-columns: 69px 34px 1fr; grid-template-rows: 17px 17px 5px 16px 16px 16px 17px 17px; line-height: 17px; }
      .url { grid-column: 1 / 4; overflow: hidden; }
      .k { grid-column: 1 / 3; }
      .gap { grid-column: 1 / 4; }
      .blue { grid-column: 2 / 4; color: #1a1ac0; }
    </style>
    <div class="tabs">
      <span class="on" style="width:96px"><nm-label w="80">Download status</nm-label></span>
      <span style="width:75px;padding-right:2px"><nm-label w="64">Speed Limiter</nm-label></span>
      <span style="width:115px"><nm-label w="106">Options on completion</nm-label></span>
    </div>
    <div class="panel">
      <div class="url"><nm-label w="484">https://dl.bobpony.com/windows/beta/8/x86/6.2.7955.0.fbl_srv_wdacxml.110228-1930_x86fre_clie</nm-label></div>
      <div><nm-label w="31">Status</nm-label></div><div class="blue"><nm-label w="83">Receiving data...</nm-label></div>
      <div class="gap"></div>
      <div class="k"><nm-label w="37">File size</nm-label></div><div><nm-label w="47">2.396  GB</nm-label></div>
      <div class="k"><nm-label w="59">Downloaded</nm-label></div><div><nm-label w="109">1.663  GB  ( 69.37 % )</nm-label></div>
      <div class="k"><nm-label w="64">Transfer rate</nm-label></div><div><nm-label w="68">8.065  MB/sec</nm-label></div>
      <div class="k"><nm-label w="41">Time left</nm-label></div><div><nm-label w="59">1 min 41 sec</nm-label></div>
      <div class="k"><nm-label w="86">Resume capability</nm-label></div><div style="padding-left:77px"><nm-label w="18">Yes</nm-label></div>
    </div>`;
  }
}

class IdmProgress extends NmPart {
  render() {
    return `
    <style>
      :host { display: block; height: 16px; box-sizing: border-box; border: 1px solid #a2a2a2; border-radius: 1px; background: linear-gradient(#ededed, #d2d2d2 45%, #c4c4c4 50%, #d6d6d6); }
      div { width: 351px; height: 14px;
        background: linear-gradient(90deg, transparent 165px, rgba(220,255,190,.45) 217px, transparent 265px),
          linear-gradient(#c4f3c2, #8fe78c 38%, #0bc92a 45%, #0ccc2c 75%, #4adb56); }
    </style><div></div>`;
  }
}

class IdmSegments extends NmPart {
  render() {
    // [start, end] of each downloaded stretch, and the connection start marks
    const done = [[0, 34], [65, 92], [102, 118], [128, 160], [192, 287], [319, 413], [446, 477], [479, 504]];
    const marks = [0, 65, 102, 128, 254, 381, 446, 478];
    return `
    <style>
      :host { display: block; height: 15px; box-sizing: border-box; border: 1px solid #6d7480; background: #eeeefa; }
      svg { display: block; }
    </style>
    <svg width="510" height="13">
      <defs><linearGradient id="s" x1="0" y1="0" x2="0" y2="1">
        <stop offset="0" stop-color="#b9b8ee"/><stop offset=".3" stop-color="#5461cd"/><stop offset=".5" stop-color="#1131b3"/><stop offset=".68" stop-color="#0d57c8"/><stop offset="1" stop-color="#2c9be8"/>
      </linearGradient></defs>
      ${done.map(([a, b]) => `<rect x="${a}" width="${b - a}" height="13" fill="url(#s)"/>`).join('')}
      ${marks.map(x => `<rect x="${x}" width="1" height="13" fill="#d8364e" opacity=".6"/>`).join('')}
    </svg>`;
  }
}

class IdmConnections extends NmPart {
  render() {
    const sizes = ['166.349', '153.779', '153.373', '146.216', '151.341', '423.152'];
    return `
    <style>
      :host { display: flex; height: 128px; box-sizing: border-box; border: 1px solid #858389; background: #fff; overflow: hidden; }
      .table { width: 492px; }
      .row { display: grid; grid-template-columns: 36px 99px 1fr; height: 17px; line-height: 19px; background: #b9b4ba; padding-left: 1px; }
      .row span:first-child { padding-left: 9px; }
      .head { grid-template-columns: 36px 100px 1fr; height: 25px; line-height: 28px; background: linear-gradient(#fff 40%, #f3f6f8); padding-left: 0; box-sizing: border-box; border-bottom: 1px solid #d9dcdf; overflow: hidden; }
      .head span:first-child { padding-left: 6px; }
      .head span:last-child { border-right: 1px solid #e2e5e8; margin-right: 11px; }
      .bar { width: 18px; display: flex; flex-direction: column; align-items: center; background: #f1f1f1; padding: 8px 0 6px; box-sizing: border-box; color: #333; }
      .thumb { width: 15px; height: 14px; margin: 7px 1px auto 0; border: 1px solid #909498; background: linear-gradient(90deg, #f6f6f6, #d0d0d2); flex: none; box-sizing: border-box; }
    </style>
    <div class="table">
      <div class="row head"><span><nm-label w="10">N.</nm-label></span><span><nm-label w="60">Downloaded</nm-label></span><span><nm-label w="20">Info</nm-label></span></div>
      ${sizes.map((s, i) => `<div class="row"><span>${i + 1}</span><span><nm-label w="60">${s}  MB</nm-label></span><span><nm-label w="83">Receiving data...</nm-label></span></div>`).join('')}
    </div>
    <div class="bar">
      <nm-icon name="drop" w="7" h="4" style="transform:scaleY(-1)"></nm-icon>
      <div class="thumb"></div>
      <nm-icon name="drop" w="7" h="4"></nm-icon>
    </div>`;
  }
}

class IdmWindow extends NmPart {
  render() {
    return `
    <style>
      :host { display: block; position: absolute; left: 236px; top: 148px; width: 551px; height: 443px; box-sizing: border-box; border: 1px solid #434e5c;
        border-radius: 7px 7px 0 0; background: linear-gradient(#c5d1dc, #d3e0ea 26px, #dfe6f4 60px, #d9e4f0 410px, #d3e2e6); box-shadow: inset 0 0 0 1px #edf3f8;
        font: condensed 11px/16px "DejaVu Sans Condensed", "DejaVu Sans", sans-serif; color: #111; }
      .title { height: 27px; display: flex; align-items: flex-start; padding: 8px 9px 0 9px; box-sizing: border-box; color: #596671; }
      .title .t { font: 12px/16px "Noto Sans", sans-serif; margin: 1px 0 0 3px; }
      .btns { margin-left: auto; display: flex; gap: 2px; }
      .btns span { width: 29px; height: 15px; border: 1px solid #8e9dab; border-radius: 1px; display: flex; align-items: center; justify-content: center; background: #cfdce6; box-shadow: inset 0 0 0 1px #dfe9f0; }
      .client { width: 532px; height: 406px; box-sizing: border-box; margin-left: 8px; background: #f0f0f0; padding: 9px 10px 0; display: flex; flex-direction: column; }
      .buttons { display: flex; height: 22px; margin: 10px 0 2px; padding-left: 13px; }
      .caption { height: 18px; line-height: 20px; padding-left: 120px; margin-bottom: 1px; }
    </style>
    <div class="title">
      <nm-icon name="globe" w="16" h="15"></nm-icon>
      <nm-label class="t" w="243">69% 6.2.7955.0.fbl_srv_wdacxml.110228-19...7z</nm-label>
      <div class="btns">
        <span><nm-icon name="wintray" w="18" h="14" style="margin-left:6px"></nm-icon></span>
        <span><nm-icon name="winmin" w="15" h="13"></nm-icon></span>
        <span><nm-icon name="winmax" w="15" h="13"></nm-icon></span>
        <span><nm-icon name="winclose" w="15" h="13"></nm-icon></span>
      </div>
    </div>
    <div class="client">
      <idm-status></idm-status>
      <idm-progress style="margin-top:9px"></idm-progress>
      <div class="buttons">
        <idm-button style="width:138px"><nm-label w="74">&lt;&lt; Hide details</nm-label></idm-button>
        <idm-button style="width:82px;margin-left:149px"><nm-label w="30">Pause</nm-label></idm-button>
        <idm-button style="width:73px;margin-left:29px"><nm-label w="33">Cancel</nm-label></idm-button>
      </div>
      <div class="caption"><nm-label w="260">Start positions and download progress by connections</nm-label></div>
      <idm-segments></idm-segments>
      <idm-connections style="margin-top:9px"></idm-connections>
    </div>`;
  }
}

class NmDesktop extends NmPart {
  render() {
    return `
    <style>
      :host { display: flex; flex-direction: column; width: 1024px; height: 768px; position: relative; overflow: hidden; }
      .addons { height: 20px; box-sizing: border-box; border-top: 1px solid #b9c3cb; background: #d9e7f1; }
    </style>
    <nm-titlebar></nm-titlebar>
    <nm-navbar></nm-navbar>
    <nm-bookmarks></nm-bookmarks>
    <nm-tabstrip></nm-tabstrip>
    <nm-page></nm-page>
    <div class="addons"></div>
    <nm-taskbar></nm-taskbar>
    <idm-window></idm-window>`;
  }
}

customElements.define('nm-desktop', NmDesktop);
customElements.define('nm-titlebar', NmTitlebar);
customElements.define('nm-navbar', NmNavbar);
customElements.define('nm-bookmarks', NmBookmarks);
customElements.define('nm-tabstrip', NmTabstrip);
customElements.define('nm-tab', NmTab);
customElements.define('nm-page', NmPage);
customElements.define('nm-taskbar', NmTaskbar);
customElements.define('idm-window', IdmWindow);
customElements.define('idm-button', IdmButton);
customElements.define('idm-status', IdmStatus);
customElements.define('idm-progress', IdmProgress);
customElements.define('idm-segments', IdmSegments);
customElements.define('idm-connections', IdmConnections);
customElements.define('nm-icon', NmIcon);
// labels measure themselves, so they come after all the boxes around them
customElements.define('nm-label', NmLabel);
</script>
</body>
</html>
